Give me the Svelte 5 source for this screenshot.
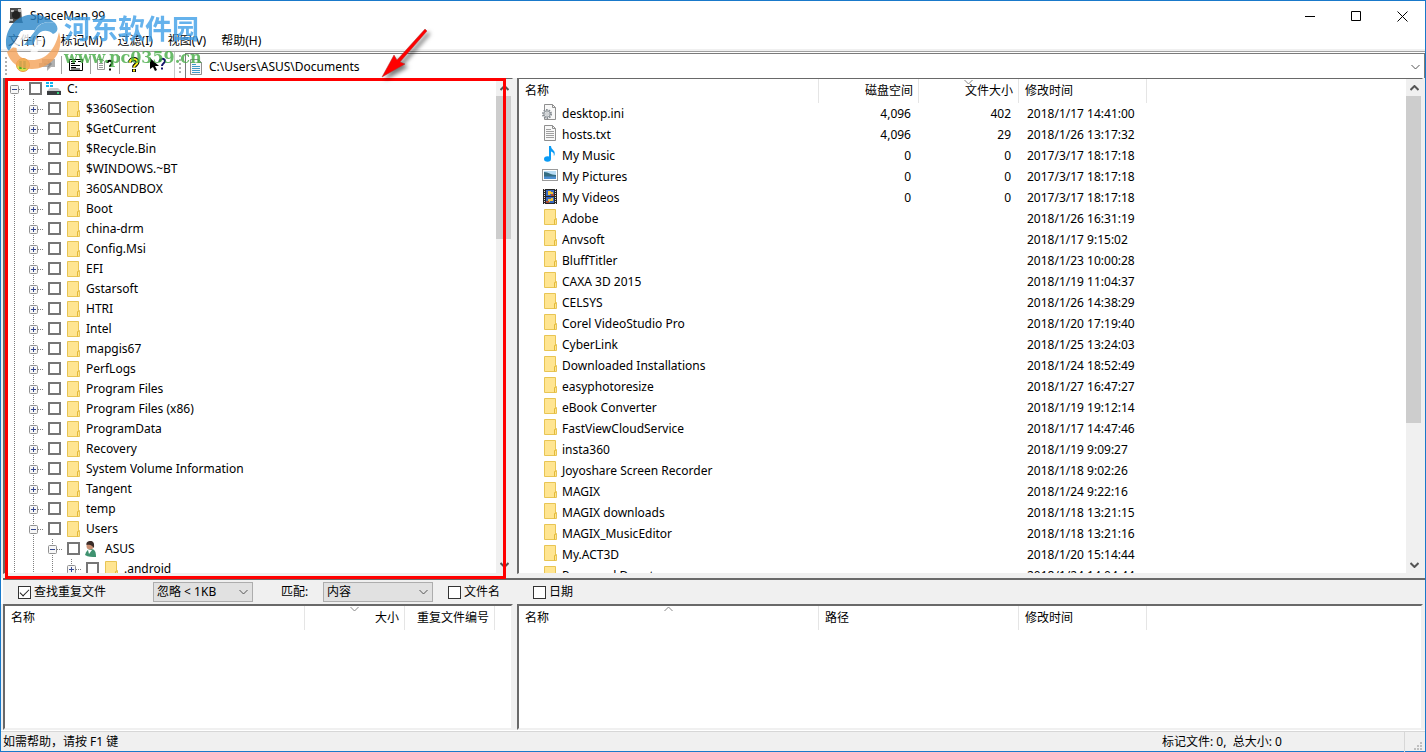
<script lang="ts">
  interface TreeNode {
    name: string;
    depth: number;
    open?: boolean;
    icon?: string;
  }

  interface FileRow {
    name: string;
    icon: string;
    disk: string;
    size: string;
    date: string;
  }

  interface Column {
    label: string;
    width: number;
    right?: boolean;
    sort?: "up" | "down";
  }

  const menus = ["文件(F)", "标记(M)", "过滤(I)", "视图(V)", "帮助(H)"];

  const rootFolders = [
    "$360Section", "$GetCurrent", "$Recycle.Bin", "$WINDOWS.~BT", "360SANDBOX", "Boot",
    "china-drm", "Config.Msi", "EFI", "Gstarsoft", "HTRI", "Intel", "mapgis67", "PerfLogs",
    "Program Files", "Program Files (x86)", "ProgramData", "Recovery",
    "System Volume Information", "Tangent", "temp",
  ];

  const tree: TreeNode[] = [
    { name: "C:", depth: 0, open: true, icon: "drive" },
    ...rootFolders.map((name) => ({ name, depth: 1 })),
    { name: "Users", depth: 1, open: true },
    { name: "ASUS", depth: 2, open: true, icon: "user" },
    { name: ".android", depth: 3 },
  ];

  const folder = (name: string, date: string): FileRow => ({ name, icon: "folder", disk: "", size: "", date });

  const files: FileRow[] = [
    { name: "desktop.ini", icon: "ini", disk: "4,096", size: "402", date: "2018/1/17 14:41:00" },
    { name: "hosts.txt", icon: "text", disk: "4,096", size: "29", date: "2018/1/26 13:17:32" },
    { name: "My Music", icon: "music", disk: "0", size: "0", date: "2017/3/17 18:17:18" },
    { name: "My Pictures", icon: "picture", disk: "0", size: "0", date: "2017/3/17 18:17:18" },
    { name: "My Videos", icon: "video", disk: "0", size: "0", date: "2017/3/17 18:17:18" },
    folder("Adobe", "2018/1/26 16:31:19"),
    folder("Anvsoft", "2018/1/17 9:15:02"),
    folder("BluffTitler", "2018/1/23 10:00:28"),
    folder("CAXA 3D 2015", "2018/1/19 11:04:37"),
    folder("CELSYS", "2018/1/26 14:38:29"),
    folder("Corel VideoStudio Pro", "2018/1/20 17:19:40"),
    folder("CyberLink", "2018/1/25 13:24:03"),
    folder("Downloaded Installations", "2018/1/24 18:52:49"),
    folder("easyphotoresize", "2018/1/27 16:47:27"),
    folder("eBook Converter", "2018/1/19 19:12:14"),
    folder("FastViewCloudService", "2018/1/17 14:47:46"),
    folder("insta360", "2018/1/19 9:09:27"),
    folder("Joyoshare Screen Recorder", "2018/1/18 9:02:26"),
    folder("MAGIX", "2018/1/24 9:22:16"),
    folder("MAGIX downloads", "2018/1/18 13:21:15"),
    folder("MAGIX_MusicEditor", "2018/1/18 13:21:16"),
    folder("My.ACT3D", "2018/1/20 15:14:44"),
    folder("Password Depot", "2018/1/24 14:04:44"),
  ];

  const fileColumns: Column[] = [
    { label: "名称", width: 300 },
    { label: "磁盘空间", width: 100, right: true },
    { label: "文件大小", width: 100, right: true, sort: "down" },
    { label: "修改时间", width: 128 },
  ];
  const duplicateColumns: Column[] = [
    { label: "名称", width: 300 },
    { label: "大小", width: 100, right: true, sort: "down" },
    { label: "重复文件编号", width: 90, right: true },
  ];
  const pathColumns: Column[] = [
    { label: "名称", width: 300, sort: "up" },
    { label: "路径", width: 200 },
    { label: "修改时间", width: 128 },
  ];

  let address = $state("C:\\Users\\ASUS\\Documents");
  let findDuplicates = $state(true);
  let byName = $state(false);
  let byDate = $state(false);
</script>

{#snippet chevron(dir: string)}
  <svg class="chevron" width="9" height="6" viewBox="0 0 9 6" aria-hidden="true">
    <path d={dir === "up" ? "M.5 5 4.5 1l4 4" : "M.5 1l4 4 4-4"} />
  </svg>
{/snippet}

{#snippet icon(name: string)}
  <svg class="icon" width="16" height="16" viewBox="0 0 16 16" aria-hidden="true">
    {#if name === "drive"}
      <path d="M0 1h3v2H0zM4 1h3v2H4zM0 4h3v2H0zM4 4h3v2H4z" fill="#12b4ee" />
      <path d="M4 7h8l3 3H1z" fill="#c9cccf" />
      <rect x="1" y="10" width="14" height="4" fill="#3a3d40" />
      <rect x="11" y="11" width="2" height="2" fill="#35d07a" />
    {:else if name === "user"}
      <path d="M1 14c1-4 3-6 6-6 4 0 5 3 5 8-4 0-8 0-11-2z" fill="#3f9270" />
      <path d="M4 9l1 4 3-4z" fill="#fff" />
      <circle cx="6" cy="5" r="3.500" fill="#c98f72" />
      <path d="M2.500 4C2 1 4 0 6.500 0 9.500 0 10.500 2 10 7 8 5 7 3 2.500 4z" fill="#3b2c28" />
    {:else if name === "ini" || name === "text"}
      <path d="M2.500.5h8l3 3v12h-11z" fill="#f8f8f8" stroke="#8f8f8f" />
      <path d="M10.500.5v3h3" fill="none" stroke="#8f8f8f" />
      {#if name === "text"}
        <path d="M4 4.500h5M4 6.500h8M4 8.500h8M4 10.500h8M4 12.500h8" stroke="#a0a0a0" />
      {:else}
        <circle cx="5" cy="10" r="4" fill="#e5e7e9" stroke="#858b90" stroke-dasharray="1.500 1" stroke-width="2" />
        <circle cx="5" cy="10" r="3" fill="#dfe2e4" stroke="#9ba1a6" />
        <circle cx="5" cy="10" r="1.200" fill="#fff" stroke="#8b9196" stroke-width=".5" />
      {/if}
    {:else if name === "music"}
      <ellipse cx="5.500" cy="13" rx="3.500" ry="2.800" fill="#0a9bf5" />
      <path d="M7 0h2c0 4 5 4 3.500 9-.3 1-1 1-.7 0C12.300 7 10.500 6 9 5.500V13H7z" fill="#0a9bf5" />
    {:else if name === "picture"}
      <rect x=".5" y="2.500" width="15" height="11" fill="#fff" stroke="#9a9a9a" />
      <rect x="2" y="4" width="12" height="8" fill="#b8dcf5" />
      <path d="M2 5c5 0 6 3 12 3v2H2z" fill="#356d82" />
      <path d="M2 9.500h12V12H2z" fill="#4d8fd0" />
    {:else if name === "video"}
      <rect x="1" y="1" width="14" height="15" fill="#272727" />
      <path d="M2.500 1v15M13.500 1v15" stroke="#ddd" stroke-width="1" stroke-dasharray="1 1" />
      <rect x="4" y="2" width="8" height="6" fill="#3769c2" />
      <rect x="4" y="9" width="8" height="6" fill="#3769c2" />
      <path d="M6 3h3v1h2v2H8v1H6zM6 11h3v-1h2v3H8v1H6z" fill="#efc33c" />
      <path d="M9 6h3v2H9zM4 13h3v2H4z" fill="#a84b37" />
    {:else}
      <path d="M2.500.5h11v9h1v6h-12z" fill="#ffe591" stroke="#e8c554" />
      <path d="M12.500 15.500v-5h1v-1" fill="none" stroke="#e3b938" />
    {/if}
  </svg>
{/snippet}

{#snippet scrollbar(label: string, size: number)}
  <div class="scrollbar">
    <button aria-label={`${label} up`}>{@render chevron("up")}</button>
    <div class="track"><div class="thumb" style:height={`${size}%`}></div></div>
    <button aria-label={`${label} down`}>{@render chevron("down")}</button>
  </div>
{/snippet}

{#snippet grid(columns: Column[], rows: FileRow[])}
  <table>
    <colgroup>
      {#each columns as col}
        <col style:width={`${col.width}px`} />
      {/each}
      <col />
    </colgroup>
    <thead>
      <tr>
        {#each columns as col}
          <th class:right={col.right}>
            {col.label}
            {#if col.sort}
              <span class="sort">{@render chevron(col.sort)}</span>
            {/if}
          </th>
        {/each}
        <td></td>
      </tr>
    </thead>
    <tbody>
      {#each rows as row (row.name)}
        <tr>
          <td><div class="file">{@render icon(row.icon)}{row.name}</div></td>
          <td class="right">{row.disk}</td>
          <td class="right">{row.size}</td>
          <td>{row.date}</td>
          <td></td>
        </tr>
      {/each}
    </tbody>
  </table>
{/snippet}

<div class="window">
  <header class="titlebar">
    <svg class="app-icon" width="16" height="16" viewBox="0 0 16 16" aria-hidden="true">
      <path d="M2 0h11l1 12 1 3H1l1-3z" fill="#4b4b4b" />
      <path d="M3 2h3v2H3zM10 1h3v3h-3zM2 11h3v2H2z" fill="#bbb" />
      <circle cx="8" cy="7" r="4" fill="#222" />
    </svg>
    <span class="title">SpaceMan 99</span>
    <button aria-label="Minimize">
      <svg width="11" height="11" viewBox="0 0 11 11"><path d="M0 5.500h10" /></svg>
    </button>
    <button aria-label="Maximize">
      <svg width="11" height="11" viewBox="0 0 11 11"><path d="M.5.5h9v9h-9z" /></svg>
    </button>
    <button aria-label="Close">
      <svg width="11" height="11" viewBox="0 0 11 11"><path d="M.5.5l10 10M10.500.5l-10 10" /></svg>
    </button>
  </header>

  <nav class="menubar">
    {#each menus as item}
      <button>{item}</button>
    {/each}
  </nav>

  <div class="rebar">
    <div class="toolbar">
      <span class="grip"></span>
      <button aria-label="Pause scan">
        <svg width="16" height="16" viewBox="0 0 16 16">
          <circle cx="8" cy="8" r="6.500" fill="#d8e34d" stroke="#f09a3c" />
          <path d="M5.500 4v8M9.500 4v8" stroke="#4faa27" stroke-width="2.500" />
        </svg>
      </button>
      <button aria-label="Undo">
        <svg width="16" height="16" viewBox="0 0 16 16">
          <path d="M3 2h13v8h-4l-4 4v-4H0V6h3z" fill="#b0b0b0" />
          <path d="M5 7h7M9 4l3 3-3 3" fill="none" stroke="#8b8b8b" stroke-width="1.500" />
        </svg>
      </button>
      <span class="separator"></span>
      <button aria-label="Details">
        <svg width="16" height="16" viewBox="0 0 16 16">
          <path d="M1.500 2.500h13v11h-13z" fill="#fff" stroke="#000" />
          <path d="M3 4.500h5M3 6.500h4M3 8.500h9M3 10.500h5M3 12h9M10 4.500h3" stroke="#000" />
        </svg>
      </button>
      <span class="separator"></span>
      <button aria-label="File info">
        <svg width="16" height="16" viewBox="0 0 16 16">
          <path d="M.5 2.500h5l2 2v8h-7z" fill="#fff" stroke="#999" />
          <path d="M2 6.500h4M2 8.500h4M2 10.500h4" stroke="#999" />
          <path d="M10.500 6c0-3 4.500-3 4.500 0 0 2-2 1.500-2 4M13 11.500v2" fill="none" stroke="#000" stroke-width="2" />
        </svg>
      </button>
      <span class="separator"></span>
      <button aria-label="Help">
        <svg width="16" height="16" viewBox="0 0 16 16">
          <path d="M4 5.500C4 1 11.500 1 11.500 5c0 3-3.500 2.500-3.500 5.500M8 12v3" fill="none" stroke="#000" stroke-width="4" />
          <path d="M4 5.500C4 1 11.500 1 11.500 5c0 3-3.500 2.500-3.500 5.500M8 12.500v2" fill="none" stroke="#ffee1c" stroke-width="2" />
        </svg>
      </button>
      <button aria-label="What's this">
        <svg width="16" height="16" viewBox="0 0 16 16">
          <path d="M0 1v11l3-2 2 4 2-1-2-4h4z" fill="#000" />
          <path d="M9.500 5c0-4 5.500-4 5.500-1 0 2.500-3 2-3 5M12 10.500v2" fill="none" stroke="#14146b" stroke-width="2" />
        </svg>
      </button>
    </div>
    <span class="grip"></span>
    <div class="address">
      <svg width="16" height="16" viewBox="0 0 16 16" aria-hidden="true">
        <path d="M2.500.5h8l3 3v12h-11z" fill="#f8f8f8" stroke="#8f8f8f" />
        <path d="M10.500.5v3h3" fill="none" stroke="#8f8f8f" />
        <path d="M4 5.500h4M4 7.500h8M4 9.500h8M4 11.500h8M4 13.500h8" stroke="#3f9bc8" />
      </svg>
      <input aria-label="Address" bind:value={address} />
      <button aria-label="Address history">{@render chevron("down")}</button>
    </div>
  </div>

  <main class="panes upper">
    <section class="pane">
      <ul class="tree">
        {#each tree as node (node.name)}
          <li class:root={node.depth === 0}>
            {#each { length: node.depth } as _}
              <span class="guide"></span>
            {/each}
            <button class="guide own" aria-label={`Toggle ${node.name}`}>
              <svg width="9" height="9" viewBox="0 0 9 9">
                <rect x=".5" y=".5" width="8" height="8" rx="1" fill="#f7f7f7" stroke="#919191" />
                <path d={node.open ? "M2 4.500h5" : "M2 4.500h5M4.500 2v5"} stroke="#35488f" />
              </svg>
            </button>
            <label>
              <input type="checkbox" />
              {@render icon(node.icon ?? "folder")}
              {node.name}
            </label>
          </li>
        {/each}
      </ul>
      {@render scrollbar("Tree", 31)}
    </section>
    <section class="pane">
      <div class="list">{@render grid(fileColumns, files)}</div>
      {@render scrollbar("Files", 71)}
    </section>
  </main>

  <div class="filters">
    <label class="duplicates"><input type="checkbox" bind:checked={findDuplicates} />查找重复文件</label>
    <span class="select ignore">
      <select aria-label="忽略">
        <option>忽略 &lt; 1KB</option>
      </select>
      {@render chevron("down")}
    </span>
    <label class="match" for="match">匹配:</label>
    <span class="select content">
      <select id="match">
        <option>内容</option>
      </select>
      {@render chevron("down")}
    </span>
    <label class="by-name"><input type="checkbox" bind:checked={byName} />文件名</label>
    <label><input type="checkbox" bind:checked={byDate} />日期</label>
  </div>

  <div class="panes lower">
    <section class="pane">
      <div class="list">{@render grid(duplicateColumns, [])}</div>
    </section>
    <section class="pane">
      <div class="list">{@render grid(pathColumns, [])}</div>
    </section>
  </div>

  <footer>
    <span class="hint">如需帮助，请按 F1 键</span>
    <span class="totals">标记文件: 0,&nbsp; 总大小: 0</span>
    <svg width="9" height="9" viewBox="0 0 9 9" aria-hidden="true">
      <path d="M6 0h2v2H6zM3 3h2v2H3zM6 3h2v2H6zM0 6h2v2H0zM3 6h2v2H3zM6 6h2v2H6z" fill="#bfbfbf" />
    </svg>
  </footer>

  <div class="watermark">
    <svg width="60" height="60" viewBox="0 0 60 60" aria-hidden="true">
      <path d="M2 34C1 10 27-6 51 13c-9-2-17 0-20 8H17L5 41C3 39 2 37 2 34z" fill="#2b86c9" />
      <path d="M31 21c4-8 11-10 20-8 4 5 3 9-2 11-5-5-13-4-16 2l-4 9h-9z" fill="#3d94d1" />
      <path d="M3 42l10-8c-2 10 3 15 13 16 15 1 25-9 29-28 6 20-8 37-27 37C15 59 6 53 3 42z" fill="#f4a259" />
      <path d="M7 37l12-17h12l-7 9h-5l-6 9zM25 45l8-17h7l-8 17z" fill="#fff" />
    </svg>
    <div>
      <strong>河东软件园</strong>
      <b>www.pc0359.cn</b>
    </div>
  </div>
  <div class="highlight"></div>
  <svg class="arrow" width="60" height="60" viewBox="0 0 60 60" aria-hidden="true">
    <path d="M53 8l2 2-27 31 5 2L10 56l12-22 3 5z" fill="#f00" stroke="#a33" stroke-width=".5" />
  </svg>
</div>

<style>
  :global(body) {
    margin: 0;
  }
  .window {
    position: relative;
    display: flex;
    flex-direction: column;
    box-sizing: border-box;
    height: 100vh;
    border: 1px solid #1979ca;
    background: #fff;
    color: #000;
    font-family: "Noto Sans", "Noto Sans CJK SC", sans-serif;
    font-size: 12px;
    line-height: 20px;
  }
  button,
  input,
  select {
    margin: 0;
    padding: 0;
    border: none;
    border-radius: 0;
    background: none;
    color: inherit;
    font: inherit;
  }
  svg {
    flex: none;
    display: block;
  }
  .chevron {
    fill: none;
    stroke: #555;
  }

  .titlebar {
    display: flex;
    height: 30px;
    align-items: center;
    padding-left: 7px;
  }
  .title {
    flex: 1;
    margin-left: 6px;
  }
  .titlebar button {
    display: grid;
    place-items: center;
    width: 46px;
    height: 30px;
  }
  .titlebar button path {
    fill: none;
    stroke: #000;
  }
  .menubar {
    display: flex;
    gap: 15px;
    height: 18px;
    padding-left: 7px;
    border-bottom: 2px solid #f0f0f0;
  }

  .rebar {
    display: flex;
    height: 26px;
    border-top: 1px solid #a0a0a0;
  }
  .toolbar {
    display: flex;
    align-items: center;
    width: 174px;
    box-sizing: border-box;
    border-right: 1px solid #c8c8c8;
  }
  .toolbar button {
    display: grid;
    place-items: center;
    width: 24px;
    height: 22px;
  }
  .separator {
    width: 1px;
    height: 18px;
    margin: 0 2px;
    background: #a0a0a0;
  }
  .grip {
    width: 2px;
    height: 20px;
    margin: 3px 4px 0;
    background: repeating-linear-gradient(#b0b0b0 0 2px, transparent 2px 4px);
  }
  .address {
    flex: 1;
    display: flex;
    align-items: center;
    margin-top: 1px;
    padding: 1px 0 0 2px;
    border: solid #7a7a7a;
    border-width: 1px 1px 0;
  }
  .address input {
    flex: 1;
    margin-left: 5px;
    outline: none;
  }
  .address button {
    padding: 0 4px;
  }

  .panes {
    display: grid;
    grid-template-columns: 510px 1fr;
    gap: 4px;
    padding: 0 2px;
    background: #f0f0f0;
  }
  .upper {
    flex: 1;
    min-height: 0;
  }
  .lower {
    height: 126px;
  }
  .pane {
    display: flex;
    min-width: 0;
    min-height: 0;
    border: 2px solid;
    border-color: #696969 #f0f0f0 #f0f0f0 #696969;
    background: #fff;
  }
  .upper .pane {
    margin-bottom: 4px;
    border-width: 1px 1px 1px 2px;
  }
  .tree {
    flex: 1;
    margin: 0;
    padding: 0;
    overflow: hidden;
    list-style: none;
  }
  .tree li {
    display: flex;
    height: 20px;
    overflow: hidden;
  }
  .guide {
    flex: none;
    display: grid;
    place-items: center;
    width: 19px;
    height: 20px;
    background: repeating-linear-gradient(#808080 0 1px, transparent 1px 2px) 9px 0 / 1px 20px no-repeat;
  }
  .own {
    background:
      repeating-linear-gradient(#808080 0 1px, transparent 1px 2px) 9px 0 / 1px 20px no-repeat,
      repeating-linear-gradient(90deg, #808080 0 1px, transparent 1px 2px) 14px 10px / 5px 1px no-repeat;
  }
  .root .own {
    background-position: 9px 10px, 14px 10px;
  }
  .tree label {
    display: flex;
    align-items: center;
    white-space: nowrap;
  }
  .tree input {
    appearance: none;
    box-sizing: border-box;
    width: 13px;
    height: 13px;
    margin: 0 4px 1px 5px;
    border: 2px solid #767676;
    background: #fff;
  }
  .tree .icon {
    margin-right: 5px;
  }

  .scrollbar {
    display: flex;
    flex-direction: column;
    width: 16px;
    background: #f0f0f0;
  }
  .scrollbar button {
    display: grid;
    place-items: center;
    height: 17px;
  }
  .scrollbar .chevron {
    stroke-width: 2;
  }
  .track {
    flex: 1;
  }
  .thumb {
    margin-right: 1px;
    background: #cdcdcd;
  }

  .list {
    flex: 1;
    overflow: hidden;
  }
  table {
    width: 100%;
    table-layout: fixed;
    border-spacing: 0;
    white-space: nowrap;
  }
  th,
  td {
    height: 21px;
    padding: 0 8px;
    text-align: left;
  }
  th {
    position: relative;
    height: 24px;
    padding: 0 5px 0 6px;
    border-right: 1px solid #e5e5e5;
    font-weight: normal;
    box-sizing: border-box;
  }
  .right {
    text-align: right;
  }
  .sort {
    position: absolute;
    top: 0;
    left: 0;
    right: 0;
    display: grid;
    justify-content: center;
  }
  .sort .chevron {
    stroke: #888;
  }
  .file {
    display: flex;
    align-items: center;
    gap: 4px;
    height: 20px;
    padding-left: 15px;
  }
  .file .icon {
    margin-bottom: 4px;
  }

  .filters {
    display: flex;
    align-items: center;
    height: 24px;
    margin-left: 2px;
    padding-left: 15px;
    border-top: 2px solid #696969;
    background: #f0f0f0;
  }
  .filters label {
    display: flex;
    align-items: center;
    gap: 3px;
  }
  .filters input {
    appearance: none;
    box-sizing: border-box;
    width: 13px;
    height: 13px;
    border: 1px solid #333;
    background: #fff;
  }
  .filters input:checked::after {
    content: "";
    display: block;
    width: 9px;
    height: 5px;
    margin: 2px 1px;
    box-sizing: border-box;
    border: solid #222;
    border-width: 0 0 1px 1px;
    transform: rotate(-45deg);
  }
  .duplicates {
    width: 135px;
  }
  .select {
    display: flex;
    align-items: center;
    height: 18px;
    border: 1px solid #adadad;
    background: #e1e1e1;
  }
  .select select {
    appearance: none;
    flex: 1;
    min-width: 0;
    padding-left: 3px;
  }
  .select .chevron {
    margin: 0 4px 0 -13px;
    pointer-events: none;
  }
  .ignore {
    width: 98px;
    margin-right: 28px;
  }
  .match {
    width: 42px;
  }
  .content {
    width: 108px;
    margin-right: 15px;
  }
  .by-name {
    width: 85px;
  }

  footer {
    display: flex;
    align-items: center;
    height: 18px;
    margin-top: 1px;
    padding: 1px 2px 0;
    border-top: 1px solid #d7d7d7;
    background: #f0f0f0;
  }
  .hint {
    flex: 1;
  }
  .totals {
    width: 242px;
    margin-right: 9px;
    border-right: 1px solid #d7d7d7;
  }
  footer svg {
    align-self: flex-end;
  }

  .watermark {
    position: absolute;
    top: 9px;
    left: 3px;
    display: flex;
    opacity: 0.8;
    pointer-events: none;
  }
  .watermark strong,
  .watermark b {
    display: block;
    white-space: nowrap;
  }
  .watermark strong {
    color: #3f9fe8;
    font-size: 27px;
    line-height: 38px;
  }
  .watermark b {
    color: #45ab45;
    font-family: "DejaVu Serif", serif;
    font-size: 16px;
    line-height: 20px;
  }
  .highlight {
    position: absolute;
    top: 77px;
    left: 4px;
    width: 495px;
    bottom: 172px;
    border: 3px solid #f00;
    pointer-events: none;
  }
  .arrow {
    position: absolute;
    top: 20px;
    left: 371px;
    filter: drop-shadow(3px 3px 2px #0008);
    pointer-events: none;
  }
</style>
